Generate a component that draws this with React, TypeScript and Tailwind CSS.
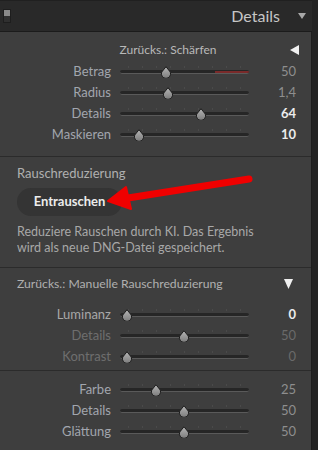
import React from "react";

type Row = {
  label: string;
  value: string;
  pos: number;
  labelTone?: string;
  valueTone?: string;
  red?: boolean;
};

const Thumb: React.FC<{ pos: number }> = ({ pos }) => (
  <svg
    width="12"
    height="12"
    viewBox="0 0 12 12"
    className="absolute top-[-4px]"
    style={{ left: pos - 6 }}
  >
    <defs>
      <linearGradient id="tg" x1="0" y1="0" x2="0" y2="1">
        <stop offset="0" stopColor="#b5b5b5" />
        <stop offset="1" stopColor="#7c7c7c" />
      </linearGradient>
    </defs>
    <path d="M6 0.7 L10.3 6.1 A4.6 4.6 0 1 1 1.7 6.1 Z" fill="url(#tg)" stroke="#1c1c1c" strokeWidth="1" />
  </svg>
);

const Slider: React.FC<{ pos: number; red?: boolean }> = ({ pos, red }) => (
  <div className="relative ml-[9px] w-[129px] h-[4px]">
    <div className="absolute inset-x-[8px] top-[-4px] flex justify-between">
      {Array.from({ length: 9 }).map((_, i) => (
        <span key={i} className="w-px h-[2px] bg-[#4a4a4a]" />
      ))}
    </div>
    <div className="h-[4px] rounded-full bg-[#262626] border-b border-[#5a5a5a] overflow-hidden flex justify-end">
      {red && <div className="w-[34px] h-[2px] mt-px bg-[#7a2a2a]" />}
    </div>
    <Thumb pos={pos} />
  </div>
);

const SliderRow: React.FC<Row> = ({ label, value, pos, labelTone, valueTone, red }) => (
  <div className="flex items-center h-[21px]">
    <div className={`w-[111px] text-right text-[13px] ${labelTone ?? "text-[#a2a6ae]"}`}>{label}</div>
    <Slider pos={pos} red={red} />
    <div className={`w-[47px] text-right text-[13px] ${valueTone ?? "text-[#8e8e8e]"}`}>{value}</div>
  </div>
);

const Divider = () => <div className="h-px bg-[#2b2b2b]" />;

export default function App() {
  return (
    <div
      className="w-[318px] h-[450px] flex bg-[#242424] overflow-hidden"
      style={{ fontFamily: "Lato, 'Open Sans', sans-serif" }}
    >
      <div className="w-[312px] flex flex-col relative">
        <div className="h-[31px] bg-[#292929] border-t border-[#202020] flex items-center justify-between">
          <div className="ml-[3px] w-[8px] h-[14px] flex flex-col border border-[#1e1e1e]">
            <div className="flex-1 bg-[#8a8a8a]" />
            <div className="flex-1 bg-[#303030]" />
          </div>
          <div className="flex items-center">
            <span className="text-[16px] text-[#c6c6c6] mr-[18px]">Details</span>
            <svg width="8" height="7" viewBox="0 0 8 7" className="mr-[6px]">
              <path d="M0 0 H8 L4 6 Z" fill="#a8a8a8" />
            </svg>
          </div>
        </div>
        <div className="h-px bg-[#1b1b1b]" />

        <div className="flex-1 bg-[#3e3e3e] border-r border-[#1e1e1e]">
          {/* Schärfen */}
          <div className="pt-[8px] pb-[11px]">
            <div className="relative h-[20px] flex items-center justify-center">
              <span className="text-[12px] text-[#b9b9b9] ml-[25px]">Zurücks.: Schärfen</span>
              <svg width="9" height="10" viewBox="0 0 9 10" className="absolute left-[290px] top-[5px]">
                <path d="M9 0 V10 L0 5 Z" fill="#f0f0f0" />
              </svg>
            </div>
            <div className="mt-[1px]">
              <SliderRow label="Betrag" value="50" pos={46} red />
              <SliderRow label="Radius" value="1,4" pos={48} />
              <SliderRow label="Details" value="64" pos={81} valueTone="text-[#ececec] font-bold" />
              <SliderRow label="Maskieren" value="10" pos={19} valueTone="text-[#ececec] font-bold" />
            </div>
          </div>
          <Divider />

          {/* Rauschreduzierung */}
          <div className="pl-[17px] pt-[7px] pb-[11px] relative">
            <div className="text-[13px] text-[#b0b0b0] leading-[18px]">Rauschreduzierung</div>
            <button className="mt-[6px] w-[105px] h-[28px] rounded-full bg-[#343434] text-[13px] font-bold text-[#ececec]">
              Entrauschen
            </button>
            <div className="mt-[8px] text-[12.5px] leading-[16px] text-[#a8a8a8]">
              Reduziere Rauschen durch KI. Das Ergebnis
              <br />
              wird als neue DNG-Datei gespeichert.
            </div>
          </div>
          <Divider />

          {/* Manuelle Rauschreduzierung */}
          <div className="pt-[7px] pb-[3px]">
            <div className="pl-[17px] pr-[18px] h-[18px] flex items-center justify-between">
              <span className="text-[12.2px] text-[#b0b0b0]">Zurücks.: Manuelle Rauschreduzierung</span>
              <svg width="9" height="10" viewBox="0 0 9 10">
                <path d="M0 0 H9 L4.5 10 Z" fill="#f0f0f0" />
              </svg>
            </div>
            <div className="mt-[11px]">
              <SliderRow label="Luminanz" value="0" pos={7} labelTone="text-[#a8a8a8]" valueTone="text-[#ececec] font-bold" />
              <SliderRow label="Details" value="50" pos={64} labelTone="text-[#6e6e6e]" valueTone="text-[#6a6a6a]" />
              <SliderRow label="Kontrast" value="0" pos={7} labelTone="text-[#6e6e6e]" valueTone="text-[#6a6a6a]" />
            </div>
          </div>
          <Divider />

          <div className="pt-[8px]">
            <SliderRow label="Farbe" value="25" pos={36} />
            <SliderRow label="Details" value="50" pos={64} />
            <SliderRow label="Glättung" value="50" pos={64} />
          </div>
        </div>

        <svg width="312" height="450" className="absolute left-0 top-0 pointer-events-none">
          <line x1="249" y1="179" x2="128" y2="198" stroke="#f00000" strokeWidth="7" strokeLinecap="round" />
          <path d="M108 201 L126 187 L131 209 Z" fill="#f00000" stroke="#f00000" strokeWidth="2" strokeLinejoin="round" />
        </svg>
      </div>
      <div className="flex-1 bg-[#232323]" />
    </div>
  );
}
